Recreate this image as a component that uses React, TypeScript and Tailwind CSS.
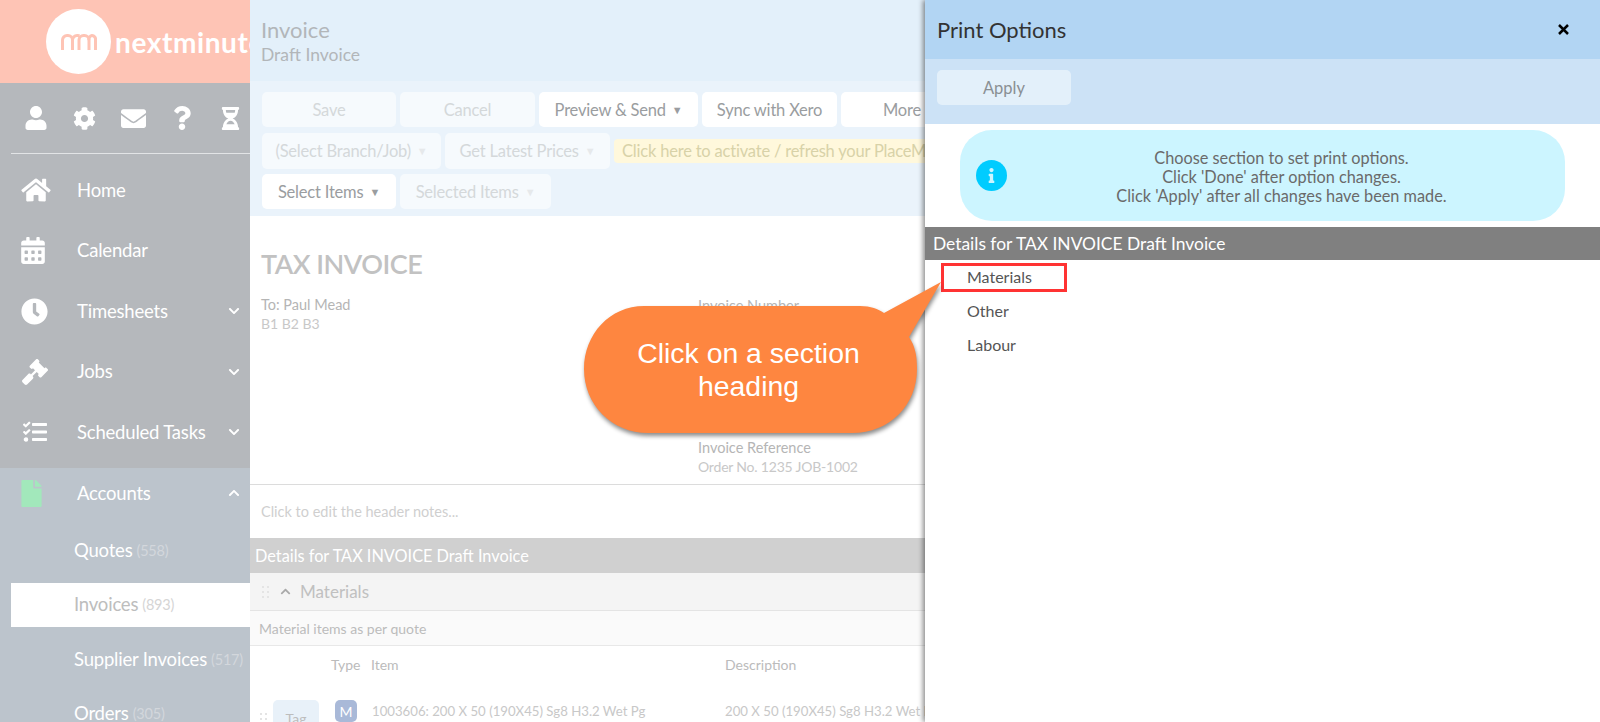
import { FaUser, FaCog, FaEnvelope, FaQuestion, FaHourglassHalf, FaHome, FaCalendarAlt, FaClock, FaGavel, FaTasks, FaFile, FaChevronDown, FaChevronUp, FaInfo } from 'react-icons/fa';
import type { ReactNode } from 'react';

function DragDots() {
  return (
    <svg width="7" height="12" viewBox="0 0 7 12" fill="#e4e4e4" className="shrink-0">
      {[1, 6, 11].map((y) => (
        <g key={y}>
          <rect x="0" y={y - 1} width="2" height="2" />
          <rect x="5" y={y - 1} width="2" height="2" />
        </g>
      ))}
    </svg>
  );
}

function NavItem({ icon, label, chevron, height }: { icon: ReactNode; label: string; chevron?: 'up' | 'down'; height: string }) {
  return (
    <div className={`flex items-center pl-[21px] pr-[10px] text-white ${height}`}>
      <div className="w-[56px] shrink-0">{icon}</div>
      <span className="flex-1 pt-[1px] text-[18.5px] tracking-[-0.2px]">{label}</span>
      {chevron === 'down' && <FaChevronDown className="h-[12px] w-[12px]" />}
      {chevron === 'up' && <FaChevronUp className="h-[12px] w-[12px]" />}
    </div>
  );
}

function SubItem({ label, count, active, height }: { label: string; count: string; active?: boolean; height: string }) {
  return (
    <div className={`ml-[11px] flex items-center pl-[63px] text-[18.5px] tracking-[-0.2px] whitespace-nowrap ${height} ${active ? 'bg-white text-[#bdbdbd]' : 'text-white'}`}>
      {label}
      <span className={`ml-[4px] text-[14.5px] ${active ? 'text-[#d5d5d5]' : 'text-[#d3d7dc]'}`}>{count}</span>
    </div>
  );
}

function Sidebar() {
  return (
    <aside className="flex h-[722px] w-[250px] shrink-0 flex-col overflow-hidden bg-[#b5b8bc]">
      <div className="flex h-[83px] shrink-0 items-center overflow-hidden bg-[#fec4b5] pl-[46px]">
        <div className="flex h-[65px] w-[65px] shrink-0 items-center justify-center rounded-full bg-white">
          <svg width="36" height="16" viewBox="0 0 36 16" fill="none" stroke="#fec4b5" strokeWidth="3">
            <path d="M1.500 16V6a4.500 4.500 0 0 1 4.500-4.500h1a4.500 4.500 0 0 1 4.500 4.500v10" />
            <path d="M11.500 6a4.500 4.500 0 0 1 4.500-4.500h1a4.500 4.500 0 0 1 1.500 0.300" />
            <path d="M18 6a4.500 4.500 0 0 1 4.500-4.500h1a4.500 4.500 0 0 1 4.500 4.500v10" />
            <path d="M18 16V6" />
            <path d="M28 6a3.800 3.800 0 0 1 3-4.500 3.800 3.800 0 0 1 3.500 4.500v10" />
          </svg>
        </div>
        <span className="ml-[4px] text-[28px] font-bold tracking-[0.6px] text-white">nextminute</span>
      </div>
      <div className="flex h-[70px] shrink-0 items-center pl-[24px] text-white">
        <FaUser className="h-[24px] w-[24px]" />
        <FaCog className="ml-[25px] h-[23px] w-[23px]" />
        <FaEnvelope className="ml-[25px] h-[25px] w-[25px]" />
        <FaQuestion className="ml-[27px] h-[24px] w-[18px]" />
        <FaHourglassHalf className="ml-[30px] h-[23px] w-[19px]" />
      </div>
      <div className="ml-[11px] h-px shrink-0 bg-[#e2e4e6]" />
      <div className="h-[314px] shrink-0 pt-[6px]">
        <NavItem height="h-[60.5px]" icon={<FaHome className="h-[26px] w-[30px]" />} label="Home" />
        <NavItem height="h-[60.5px]" icon={<FaCalendarAlt className="h-[27px] w-[24px]" />} label="Calendar" />
        <NavItem height="h-[60.5px]" icon={<FaClock className="h-[27px] w-[27px]" />} label="Timesheets" chevron="down" />
        <NavItem height="h-[60.5px]" icon={<FaGavel className="h-[26px] w-[28px]" />} label="Jobs" chevron="down" />
        <NavItem height="h-[60.5px]" icon={<FaTasks className="h-[24px] w-[28px]" />} label="Scheduled Tasks" chevron="down" />
      </div>
      <div className="flex-1 bg-[#bcc4cc]">
        <NavItem height="h-[50px]" icon={<FaFile className="h-[27px] w-[21px] text-[#a2e8bb]" />} label="Accounts" chevron="up" />
        <SubItem height="h-[65px]" label="Quotes" count="(558)" />
        <SubItem height="h-[44px]" label="Invoices" count="(893)" active />
        <SubItem height="h-[66px]" label="Supplier Invoices" count="(517)" />
        <SubItem height="h-[42px]" label="Orders" count="(305)" />
      </div>
    </aside>
  );
}

function Btn({ children, width, dim, caret }: { children: ReactNode; width: string; dim?: boolean; caret?: boolean }) {
  return (
    <div className={`flex h-full shrink-0 items-center justify-center rounded-[5px] pt-[1px] text-[16.5px] tracking-[-0.2px] ${width} ${dim ? 'bg-[#f6fafd] text-[#d4d8da]' : 'bg-white text-[#9a9da0]'}`}>
      {children}
      {caret && <span className={`ml-[6px] text-[11px] ${dim ? 'text-[#e6e9eb]' : 'text-[#9a9da0]'}`}>▼</span>}
    </div>
  );
}

function Main() {
  return (
    <main className="h-[722px] w-[675px] shrink-0 overflow-hidden bg-white">
      <div className="flex h-[81px] flex-col justify-center bg-[#e3f0fa] pt-[1px] pl-[11px] text-[#b2b6b9]">
        <div className="text-[22px] leading-[26px]">Invoice</div>
        <div className="text-[17.5px] leading-[23px]">Draft Invoice</div>
      </div>
      <div className="h-[135px] bg-[#eaf3fb] pt-[11px] pl-[12px]">
        <div className="flex h-[35px] gap-[4px]">
          <Btn width="w-[134px]" dim>Save</Btn>
          <Btn width="w-[135px]" dim>Cancel</Btn>
          <Btn width="w-[159px]" caret>Preview &amp; Send</Btn>
          <Btn width="w-[135px]">Sync with Xero</Btn>
          <Btn width="w-[122px]">More</Btn>
        </div>
        <div className="mt-[6px] flex h-[36px] items-center gap-[4px]">
          <Btn width="w-[179px]" dim caret>(Select Branch/Job)</Btn>
          <Btn width="w-[165px]" dim caret>Get Latest Prices</Btn>
          <div className="flex h-[24px] w-[400px] shrink-0 items-center overflow-hidden rounded-[4px] bg-[#fff8dc] pl-[8px] text-[16.5px] tracking-[-0.2px] whitespace-nowrap text-[#d8d2a8]">Click here to activate / refresh your PlaceMakers</div>
        </div>
        <div className="mt-[5px] flex h-[35px] gap-[4px]">
          <Btn width="w-[134px]" caret>Select Items</Btn>
          <Btn width="w-[151px]" dim caret>Selected Items</Btn>
        </div>
      </div>
      <div className="flex h-[269px] border-b border-[#dcdcdc] pl-[11px]">
        <div className="w-[437px] shrink-0">
          <div className="mt-[30px] text-[27px] leading-[36px] font-semibold tracking-[-0.5px] text-[#c2c2c2]">TAX INVOICE</div>
          <div className="mt-[14px] text-[14.5px] leading-[18px] text-[#b5b5b5]">To: Paul Mead</div>
          <div className="text-[14px] leading-[19px] text-[#c8c8c8]">B1 B2 B3</div>
        </div>
        <div className="flex flex-col pb-[7px]">
          <div className="mt-[81px] text-[14.500px] leading-[18px] text-[#b5b5b5]">Invoice Number</div>
          <div className="mt-auto text-[14.500px] leading-[18px] text-[#b5b5b5]">Invoice Reference</div>
          <div className="text-[14px] leading-[20px] tracking-[-0.2px] text-[#c8c8c8]">Order No. 1235 JOB-1002</div>
        </div>
      </div>
      <div className="flex h-[53px] items-center pl-[11px] text-[14.500px] text-[#cfcfcf]">Click to edit the header notes...</div>
      <div className="flex h-[35px] items-center bg-[#d0d0d0] pt-[1px] pl-[5px] text-[16.300px] text-white">Details for TAX INVOICE Draft Invoice</div>
      <div className="flex h-[38px] items-center border-b border-[#e4e4e4] bg-[#f4f4f4] pl-[12px] text-[17px] text-[#c0c0c0]">
        <DragDots />
        <FaChevronUp className="mr-[9px] ml-[11px] h-[11px] w-[11px] text-[#a9a9a9]" />
        Materials
      </div>
      <div className="flex h-[35px] items-center border-b border-[#e8e8e8] bg-[#fafafa] pl-[9px] text-[14px] text-[#bcbcbc]">Material items as per quote</div>
      <div className="flex h-[36px] items-center text-[14px] text-[#bbbbbb]">
        <span className="ml-[81px] w-[40px] shrink-0">Type</span>
        <span className="w-[354px] shrink-0">Item</span>
        <span className="shrink-0">Description</span>
      </div>
      <div className="mt-[18px] flex h-[60px] items-start whitespace-nowrap text-[13.200px] text-[#c8c8c8]">
        <div className="mt-[13px] ml-[10px] w-[13px] shrink-0"><DragDots /></div>
        <div className="flex h-[36px] w-[46px] shrink-0 items-center justify-center rounded-[5px] bg-[#e8f1f9] text-[14px] text-[#bdbdbd]">Tag</div>
        <div className="ml-[16px] flex h-[22px] w-[22px] shrink-0 items-center justify-center rounded-[5px] bg-[#a9b9d8] text-[14px] text-white">M</div>
        <span className="ml-[15px] w-[353px] shrink-0 leading-[22px]">1003606: 200 X 50 (190X45) Sg8 H3.2 Wet Pg</span>
        <span className="shrink-0 leading-[22px]">200 X 50 (190X45) Sg8 H3.2 Wet Pg</span>
      </div>
    </main>
  );
}

function PrintPanel() {
  return (
    <section className="z-10 h-[722px] w-[675px] shrink-0 bg-white shadow-[-2px_0_5px_rgba(0,0,0,0.45)]">
      <div className="flex h-[59px] items-center justify-between bg-[#b2d5f3] pr-[31px] pl-[12px] text-[#333]">
        <span className="text-[22px]">Print Options</span>
        <svg width="11" height="11" viewBox="0 0 11 11" stroke="#000" strokeWidth="2.500" className="mb-[1px]">
          <path d="M1 1l9 9M10 1l-9 9" />
        </svg>
      </div>
      <div className="flex h-[65px] items-start bg-[#cce2f6] pt-[11px] pl-[12px]">
        <div className="flex h-[35px] w-[134px] items-center justify-center rounded-[5px] bg-[#e3f0fa] pt-[1px] text-[16.500px] text-[#8a8f93]">Apply</div>
      </div>
      <div className="mx-[35px] mt-[6px] flex h-[91px] items-center rounded-[32px] bg-[#ccf5ff] pl-[16px] text-[#6a6a6a]">
        <div className="flex h-[31px] w-[31px] shrink-0 items-center justify-center rounded-full bg-[#00ccff]">
          <FaInfo className="h-[15px] w-[15px] text-[#ccf5ff]" />
        </div>
        <div className="flex-1 pt-[2px] pr-[9px] text-center text-[16.300px] leading-[19px]">
          <div>Choose section to set print options.</div>
          <div>Click 'Done' after option changes.</div>
          <div>Click 'Apply' after all changes have been made.</div>
        </div>
      </div>
      <div className="mt-[6px] flex h-[33px] items-center bg-[#808080] pt-[1px] pl-[8px] text-[17.400px] text-white">Details for TAX INVOICE Draft Invoice</div>
      <div className="mt-[3px] ml-[16px] flex h-[29px] w-[126px] items-center border-[3px] border-[#f33] pb-[1px] pl-[23px] text-[16px] text-[#555]">Materials</div>
      <div className="mt-[5px] flex h-[28px] items-center pl-[42px] text-[16px] text-[#555]">Other</div>
      <div className="mt-[6px] flex h-[28px] items-center pl-[42px] text-[16px] text-[#555]">Labour</div>
    </section>
  );
}

function Callout() {
  return (
    <div className="absolute top-[278px] left-[580px] z-20 h-[165px] w-[370px]">
      <svg width="370" height="165" viewBox="0 0 370 165" className="drop-shadow-[1px_3px_2px_rgba(0,0,0,0.45)]">
        <path
          d="M64 28H280C291 28 298 31 304 35L361 4 329 59C335 68 337 77 337 91 337 127 310 155 272 155H68C32 155 4 127 4 91 4 56 30 28 64 28Z"
          fill="#fe8640"
        />
      </svg>
      <div className="absolute top-[59px] left-[4px] w-[329px] text-center font-['Liberation_Sans',sans-serif] text-[28.400px] leading-[33px] text-white">
        Click on a section
        <br />
        heading
      </div>
    </div>
  );
}

export default function App() {
  return (
    <div className="relative flex h-[722px] w-[1600px] overflow-hidden bg-white font-['Lato',sans-serif]">
      <Sidebar />
      <Main />
      <PrintPanel />
      <Callout />
    </div>
  );
}
